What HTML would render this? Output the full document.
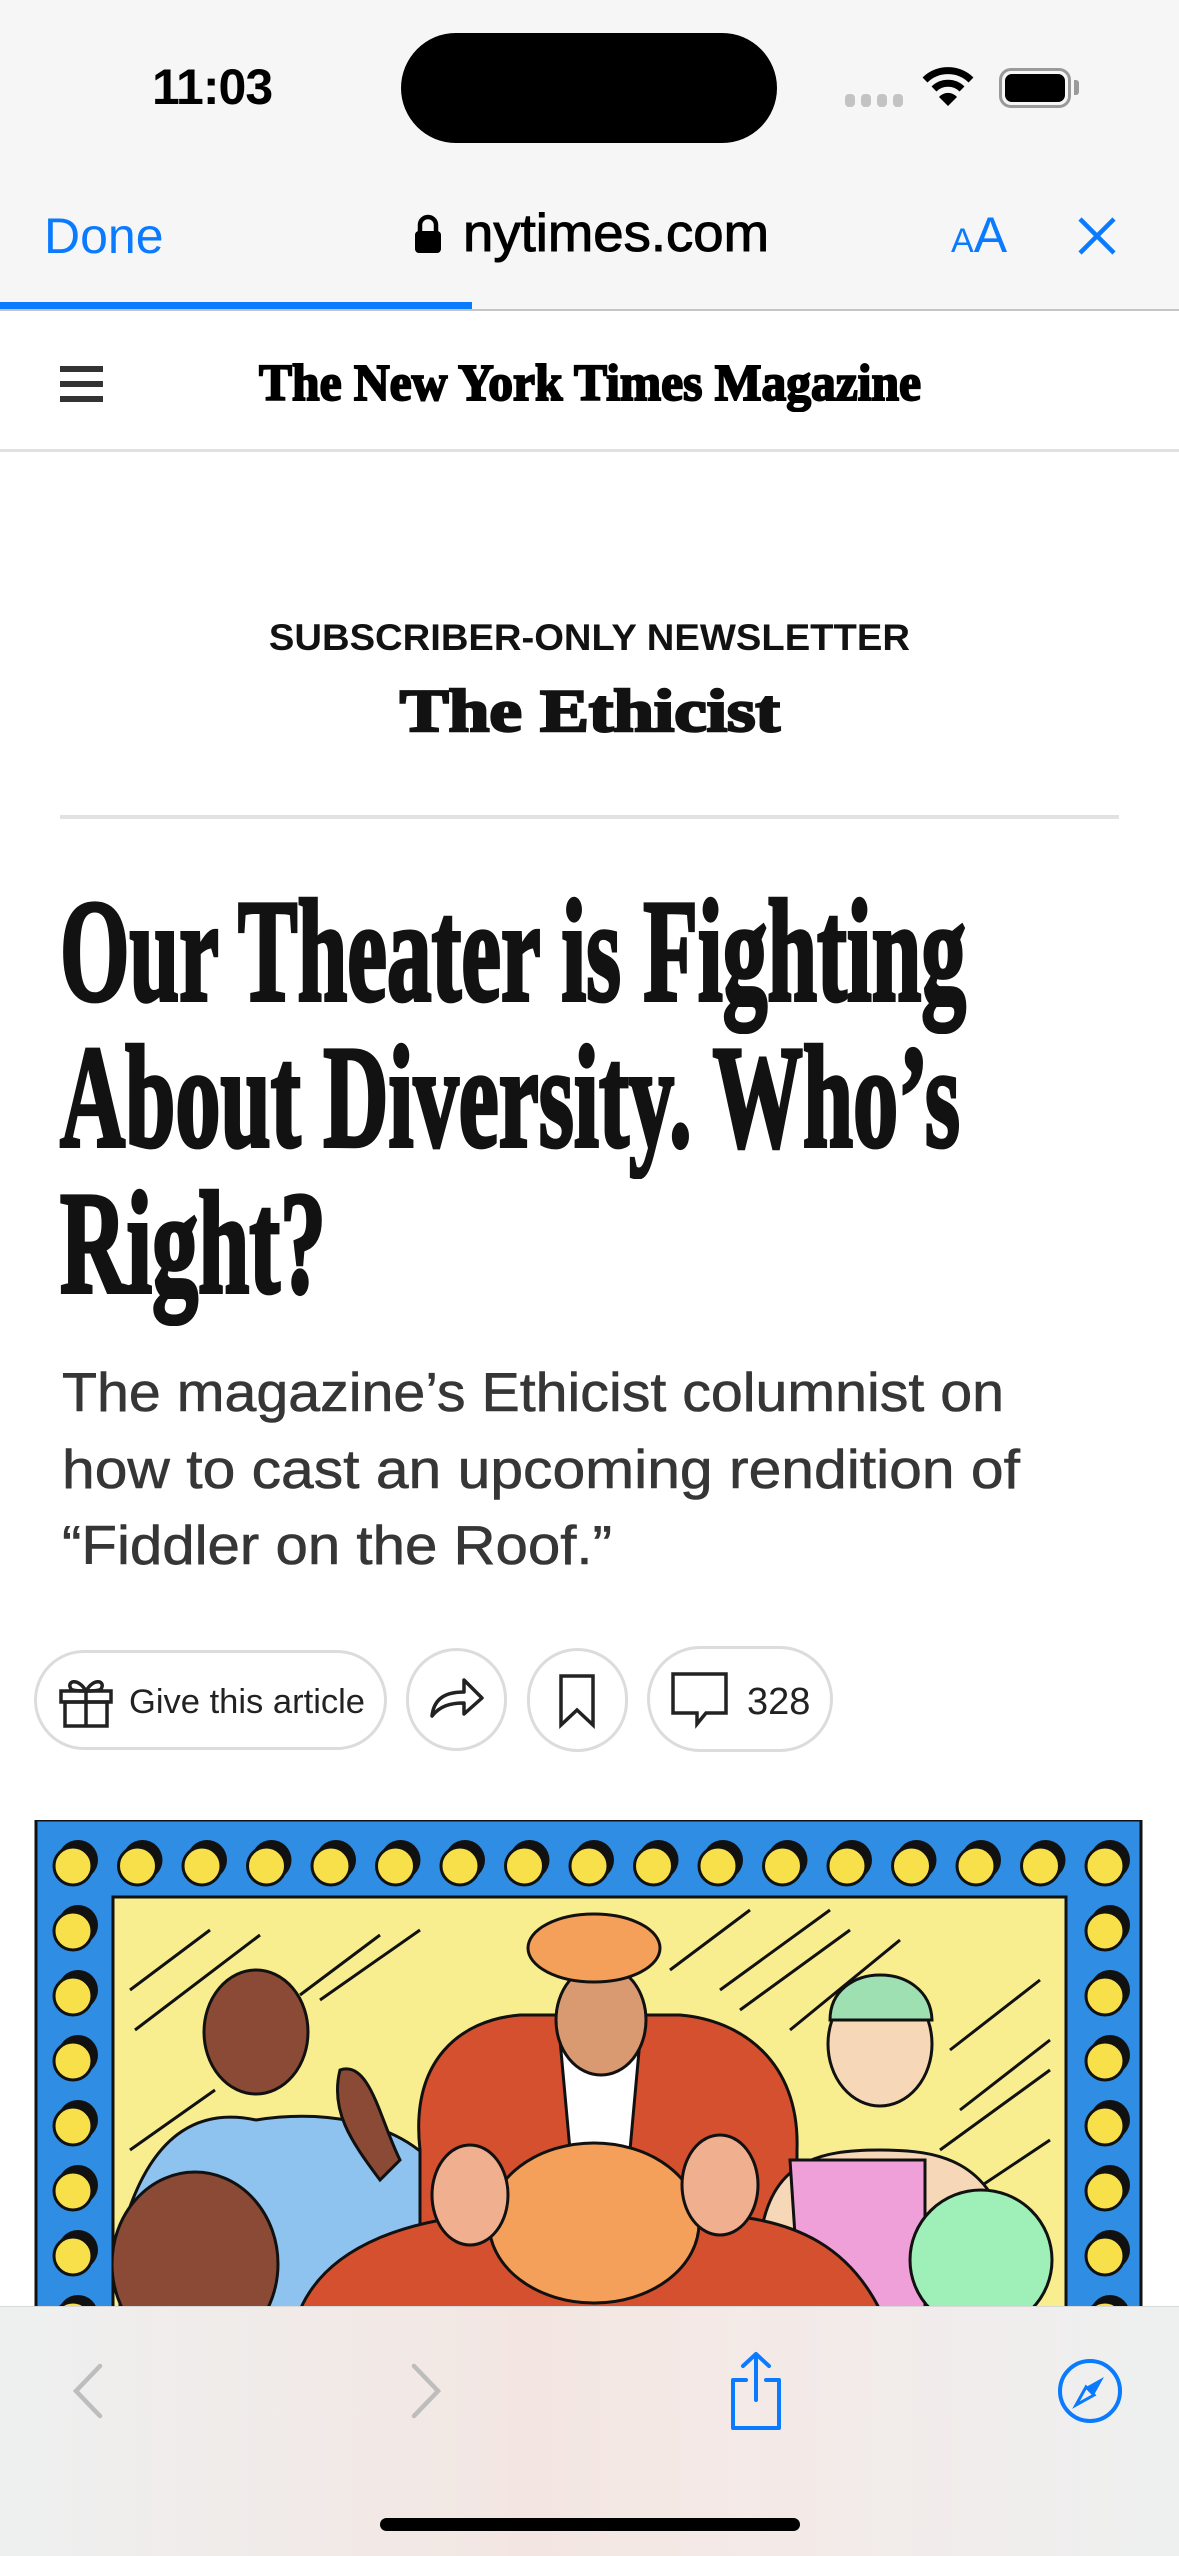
<!DOCTYPE html>
<html><head><meta charset="utf-8">
<style>
*{margin:0;padding:0;box-sizing:border-box}
html,body{width:1179px;height:2556px;overflow:hidden;background:#fff;position:relative;font-family:"Liberation Sans",sans-serif}
.a{position:absolute;white-space:nowrap;line-height:1}
.fit{transform-origin:0 0;display:inline-block}
.btn{position:absolute;border:3px solid #dcdcdc;border-radius:60px;background:#fff}
.hd{-webkit-text-stroke:4px #121212}
</style></head><body>
<div class="a" style="left:0;top:0;width:1179px;height:310px;background:#f6f6f6"></div>
<div class="a" style="left:152px;top:62px;font-size:50px;font-weight:bold;color:#000;letter-spacing:-1px">11:03</div>
<div class="a" style="left:401px;top:33px;width:376px;height:110px;border-radius:55px;background:#000"></div>
<div class="a" style="left:845px;top:94px;width:60px;height:14px">
 <span style="position:absolute;left:0;width:10px;height:13px;border-radius:4px;background:#c3c3c3"></span>
 <span style="position:absolute;left:16px;width:10px;height:13px;border-radius:4px;background:#c3c3c3"></span>
 <span style="position:absolute;left:32px;width:10px;height:13px;border-radius:4px;background:#c3c3c3"></span>
 <span style="position:absolute;left:48px;width:10px;height:13px;border-radius:4px;background:#c3c3c3"></span>
</div>
<svg class="a" style="left:922px;top:66px" width="52" height="42" viewBox="0 0 52 42"><path d="M3 14 A33 33 0 0 1 49 14" stroke="#000" stroke-width="7" fill="none"/><path d="M12 23 A20 20 0 0 1 40 23" stroke="#000" stroke-width="7" fill="none"/><path d="M26 40 L17 31 A12 12 0 0 1 35 31 Z" fill="#000"/></svg>
<div class="a" style="left:999px;top:68px;width:72px;height:40px;border:3px solid #9a9a9a;border-radius:12px;padding:3px"><div style="width:100%;height:100%;background:#000;border-radius:7px"></div></div>
<div class="a" style="left:1074px;top:80px;width:5px;height:15px;background:#9a9a9a;border-radius:0 3px 3px 0"></div>
<div class="a" style="left:44px;top:211px;font-size:50px;color:#0a7aff">Done</div>
<svg class="a" style="left:414px;top:214px" width="28" height="40" viewBox="0 0 28 40"><path d="M6 18 V11 A8 8 0 0 1 22 11 V18" stroke="#000" stroke-width="4.5" fill="none"/><rect x="1" y="17" width="26" height="22" rx="4" fill="#000"/></svg>
<div class="a" style="left:463px;top:207px;font-size:53px;color:#000;-webkit-text-stroke:1px #000"><span class="fit" data-w="306">nytimes.com</span></div>
<div class="a" style="left:951px;top:210px;color:#0a7aff"><span style="font-size:34px">A</span><span style="font-size:50px">A</span></div>
<svg class="a" style="left:1077px;top:216px" width="40" height="40" viewBox="0 0 40 40"><path d="M3 3 L37 37 M37 3 L3 37" stroke="#0a7aff" stroke-width="4.5"/></svg>
<div class="a" style="left:0;top:302px;width:472px;height:7px;background:#0a7aff"></div>
<div class="a" style="left:0;top:309px;width:1179px;height:2px;background:#c4c4c4"></div>
<div class="a" style="left:60px;top:366px;width:43px;height:6px;background:#333"></div>
<div class="a" style="left:60px;top:381px;width:43px;height:6px;background:#333"></div>
<div class="a" style="left:60px;top:396px;width:43px;height:6px;background:#333"></div>
<div class="a" style="left:259px;top:358px;font-family:'Liberation Serif',serif;font-weight:bold;font-size:52px;color:#000;-webkit-text-stroke:2px #000"><span class="fit" data-w="662">The New York Times Magazine</span></div>
<div class="a" style="left:0;top:449px;width:1179px;height:3px;background:#e0e0e0"></div>
<div class="a" style="left:0;width:1179px;text-align:center;top:619px;font-size:37px;font-weight:bold;color:#121212"><span class="fit c" data-w="641">SUBSCRIBER-ONLY NEWSLETTER</span></div>
<div class="a" style="left:0;width:1179px;text-align:center;top:681px;font-family:'Liberation Serif',serif;font-size:60px;font-weight:bold;color:#121212;-webkit-text-stroke:2.5px #121212"><span class="fit c" data-w="380">The Ethicist</span></div>
<div class="a" style="left:60px;top:815px;width:1059px;height:4px;background:#e2e2e2"></div>
<div class="a hd" style="left:60px;top:878px;font-family:'Liberation Serif',serif;font-size:146px;font-weight:bold;color:#121212"><span class="fit" data-w="906">Our Theater is Fighting</span></div>
<div class="a hd" style="left:60px;top:1024px;font-family:'Liberation Serif',serif;font-size:146px;font-weight:bold;color:#121212"><span class="fit" data-w="900">About Diversity. Who’s</span></div>
<div class="a hd" style="left:60px;top:1170px;font-family:'Liberation Serif',serif;font-size:146px;font-weight:bold;color:#121212"><span class="fit" data-w="266">Right?</span></div>
<div class="a" style="left:62px;top:1365px;font-size:55px;color:#363636;-webkit-text-stroke:0.6px #363636"><span class="fit" data-w="942">The magazine’s Ethicist columnist on</span></div>
<div class="a" style="left:62px;top:1442px;font-size:55px;color:#363636;-webkit-text-stroke:0.6px #363636"><span class="fit" data-w="958">how to cast an upcoming rendition of</span></div>
<div class="a" style="left:62px;top:1518px;font-size:55px;color:#363636;-webkit-text-stroke:0.6px #363636"><span class="fit" data-w="550">“Fiddler on the Roof.”</span></div>
<div class="btn" style="left:34px;top:1650px;width:353px;height:100px"></div>
<svg class="a" style="left:58px;top:1673px" width="56" height="56" viewBox="0 0 56 56" fill="none" stroke="#222" stroke-width="3.5"><rect x="3" y="18" width="50" height="11"/><rect x="7" y="29" width="42" height="24"/><path d="M28 18 V53"/><path d="M28 18 C20 4 8 8 13 16 C15 18 22 18 28 18 C34 18 41 18 43 16 C48 8 36 4 28 18"/></svg>
<div class="a" style="left:129px;top:1685px;font-size:34px;color:#222"><span class="fit" data-w="236">Give this article</span></div>
<div class="btn" style="left:406px;top:1648px;width:101px;height:103px"></div>
<svg class="a" style="left:428px;top:1672px" width="58" height="50" viewBox="0 0 58 50" fill="none" stroke="#222" stroke-width="3.5" stroke-linejoin="round"><path d="M4 44 C6 26 18 20 36 20 V8 L54 26 L36 42 V31 C22 31 12 34 4 44 Z"/></svg>
<div class="btn" style="left:527px;top:1648px;width:101px;height:104px"></div>
<svg class="a" style="left:556px;top:1673px" width="42" height="56" viewBox="0 0 42 56" fill="none" stroke="#222" stroke-width="3.5"><path d="M5 3 H37 V52 L21 37 L5 52 Z"/></svg>
<div class="btn" style="left:647px;top:1646px;width:186px;height:106px"></div>
<svg class="a" style="left:670px;top:1671px" width="60" height="58" viewBox="0 0 60 58" fill="none" stroke="#222" stroke-width="3.5"><path d="M3 3 H56 V42 H36 L27 53 V42 H3 Z"/></svg>
<div class="a" style="left:747px;top:1683px;font-size:38px;color:#222">328</div>
<svg class="a" style="left:0;top:1820px" width="1179" height="490" viewBox="0 0 1179 490">
<defs><clipPath id="in"><rect x="113" y="77" width="953" height="420"/></clipPath></defs>
<rect x="36" y="0" width="1105" height="500" fill="#2f8de3" stroke="#111" stroke-width="3"/>
<rect x="113" y="77" width="953" height="420" fill="#f8ee8f" stroke="#111" stroke-width="3"/>
<g clip-path="url(#in)">
<g stroke="#111" stroke-width="3">
<path d="M130 170 L210 110 M135 210 L260 115 M130 330 L215 270 M300 175 L380 115 M320 180 L420 110 M670 150 L750 90 M720 170 L830 90 M740 190 L850 110 M790 210 L900 120 M950 230 L1040 160 M960 290 L1050 220 M940 330 L1050 250 M960 380 L1050 320"/>
</g>
<path d="M120 420 C150 300 210 290 256 300 C320 290 390 300 430 340 L440 490 L120 490 Z" fill="#8ec3f0" stroke="#111" stroke-width="3"/>
<ellipse cx="256" cy="212" rx="52" ry="62" fill="#8b4a35" stroke="#111" stroke-width="3"/>
<path d="M340 250 C370 240 380 300 400 340 L380 360 C350 320 330 290 340 250 Z" fill="#8b4a35" stroke="#111" stroke-width="3"/>
<path d="M420 330 C410 240 460 200 520 195 L680 195 C740 200 800 240 797 330 L797 420 L420 420 Z" fill="#d4502e" stroke="#111" stroke-width="3"/>
<path d="M560 220 L640 220 L630 330 L570 330 Z" fill="#fff" stroke="#111" stroke-width="3"/>
<ellipse cx="601" cy="200" rx="45" ry="55" fill="#d99a72" stroke="#111" stroke-width="3"/>
<ellipse cx="594" cy="128" rx="66" ry="34" fill="#f5a05a" stroke="#111" stroke-width="3"/>
<path d="M760 420 C770 340 820 330 880 330 C940 330 990 340 1010 420 Z" fill="#f6d8b8" stroke="#111" stroke-width="3"/>
<path d="M790 340 L925 340 L925 490 L800 490 Z" fill="#f0a0d8" stroke="#111" stroke-width="3"/>
<ellipse cx="880" cy="224" rx="52" ry="62" fill="#f6d8b8" stroke="#111" stroke-width="3"/>
<path d="M830 200 C830 140 930 140 932 200 Z" fill="#9fe0b3" stroke="#111" stroke-width="3"/>
<path d="M300 490 C330 420 420 400 480 395 L720 395 C800 400 850 430 880 490 Z" fill="#d4502e" stroke="#111" stroke-width="3"/>
<ellipse cx="594" cy="403" rx="105" ry="80" fill="#f5a05a" stroke="#111" stroke-width="3"/>
<ellipse cx="470" cy="375" rx="38" ry="50" fill="#f0b090" stroke="#111" stroke-width="3"/>
<ellipse cx="720" cy="365" rx="38" ry="50" fill="#f0b090" stroke="#111" stroke-width="3"/>
<ellipse cx="195" cy="444" rx="83" ry="92" fill="#8b4a35" stroke="#111" stroke-width="3"/>
<ellipse cx="981" cy="440" rx="71" ry="70" fill="#9ff0b8" stroke="#111" stroke-width="3"/>
</g>
<g id="dots"></g>
</svg>
<div class="a" style="left:0;top:2306px;width:1179px;height:250px;background:linear-gradient(90deg,#eef0f0,#f3e6e2 45%,#f4e9e6 60%,#eef0f0);border-top:1px solid #d8d8d8"></div>
<svg class="a" style="left:70px;top:2362px" width="36" height="58" viewBox="0 0 36 58"><path d="M30 4 L6 29 L30 54" stroke="#bdbdbd" stroke-width="4.5" fill="none" stroke-linecap="round"/></svg>
<svg class="a" style="left:408px;top:2362px" width="36" height="58" viewBox="0 0 36 58"><path d="M6 4 L30 29 L6 54" stroke="#bdbdbd" stroke-width="4.5" fill="none" stroke-linecap="round"/></svg>
<svg class="a" style="left:725px;top:2350px" width="62" height="82" viewBox="0 0 62 82" fill="none" stroke="#0a7aff" stroke-width="4" stroke-linecap="round" stroke-linejoin="round"><path d="M31 4 V50 M18 16 L31 4 L44 16"/><path d="M21 30 H8 V78 H54 V30 H41"/></svg>
<svg class="a" style="left:1057px;top:2358px" width="66" height="66" viewBox="0 0 66 66"><circle cx="33" cy="33" r="30" stroke="#0a7aff" stroke-width="4" fill="none"/><path d="M47 19 L37 37 L29 29 Z" fill="#0a7aff"/><path d="M19 47 L29 29 L37 37 Z" fill="none" stroke="#0a7aff" stroke-width="3"/></svg>
<div class="a" style="left:380px;top:2518px;width:420px;height:13px;border-radius:7px;background:#000"></div>
<script>
(function(){
var g=document.getElementById('dots'),s='';
function dot(x,y){s+='<circle cx="'+(x+5)+'" cy="'+(y-6)+'" r="20" fill="#111"/><circle cx="'+x+'" cy="'+y+'" r="19" fill="#f7e04a" stroke="#111" stroke-width="3"/>';}
for(var i=0;i<17;i++)dot(73+i*64.5,46);
for(var j=1;j<8;j++){dot(73,46+j*65);dot(1105,46+j*65);}
g.innerHTML=s;
document.querySelectorAll('.fit').forEach(function(e){
 var w=+e.getAttribute('data-w'),r=e.getBoundingClientRect().width;
 if(r>0){var k=w/r;e.style.transform='scaleX('+k+')';
  if(e.classList.contains('c')){e.style.transformOrigin='50% 0';}}
});
})();
</script>
</body></html>
